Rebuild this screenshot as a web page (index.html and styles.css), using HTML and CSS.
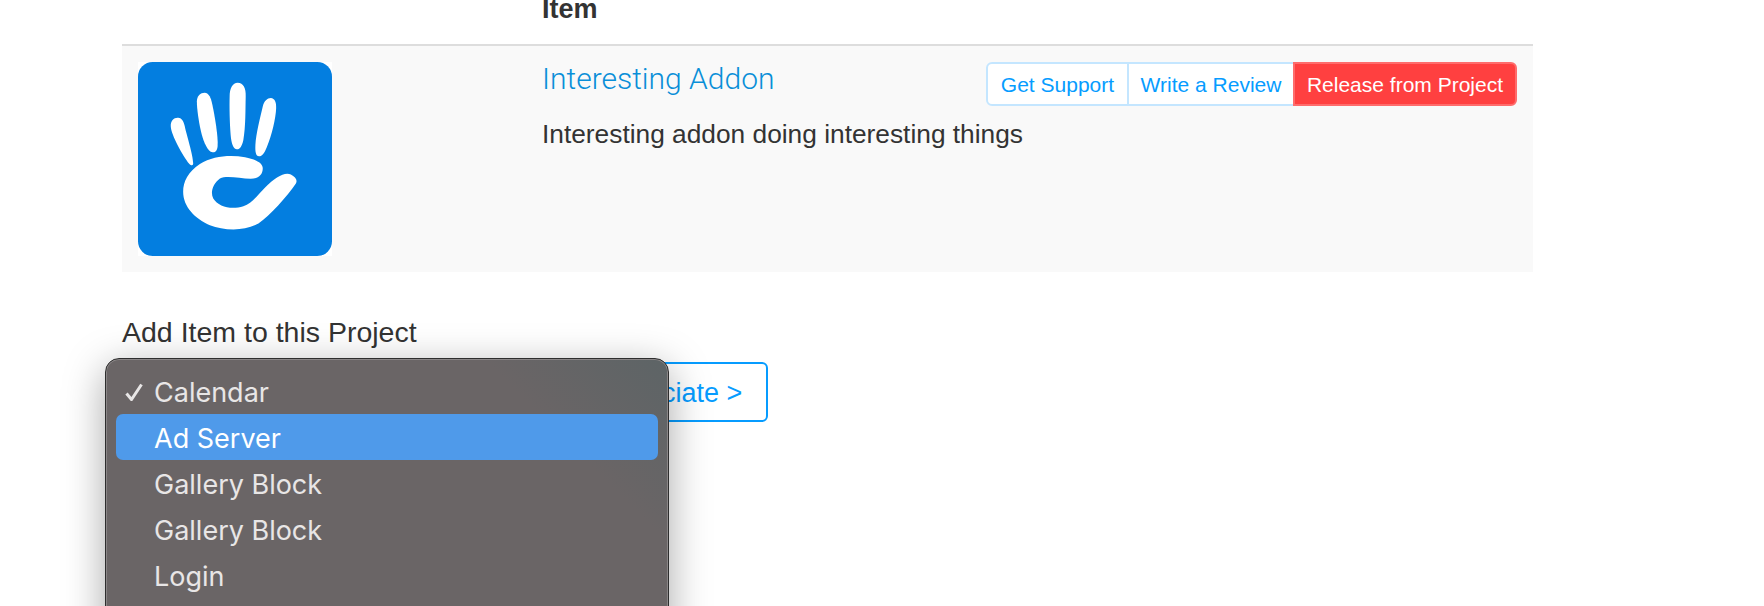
FILE: index.html
```html
<!DOCTYPE html>
<html lang="en">
<head>
    <meta charset="UTF-8">
    <title>Project Items</title>
    <link rel="stylesheet" href="styles.css">
</head>
<body>
    <div class="container">
        <table class="item-table">
            <thead>
                <tr>
                    <th class="col-logo"></th>
                    <th>Item</th>
                </tr>
            </thead>
            <tbody>
                <tr>
                    <td class="col-logo">
                        <svg class="logo" viewBox="25 7 580 580" aria-label="Concrete CMS">
                            <rect x="25" y="7" width="580" height="580" rx="44" fill="#037ee0"/>
                            <g fill="#fff">
                                <path d="M123 200C122 182 133 173 145 174C157 175 162 186 165 200C170 225 190 285 190 310C190 318 184 317 178 311C160 290 124 225 123 200Z"/>
                                <path d="M201 125C201 108 212 99 224 99C238 100 243 115 247 133C255 170 265 230 263 258C262 272 256 278 248 277C232 274 222 245 216 225C208 195 201 150 201 125Z"/>
                                <path d="M299 110C299 85 308 69 323 69C340 69 348 85 347 110C346 150 347 200 340 240C336 258 330 268 321 268C310 268 304 250 302 225C299 190 298 140 299 110Z"/>
                                <path d="M398 140C402 124 412 115 422 115C434 116 439 128 438 145C437 175 425 225 410 262C403 280 396 289 387 289C377 288 375 275 376 255C378 220 390 175 398 140Z"/>
                                <path d="M398 325C398 308 375 298 345 292C300 284 250 288 210 312C175 335 160 365 160 395C160 440 195 475 240 495C280 510 340 515 385 490C420 465 470 410 497 370C503 360 495 350 482 343C462 335 435 352 405 382C380 408 365 430 340 438C305 450 265 440 250 415C240 395 250 370 270 355C290 345 330 355 362 356C385 356 398 345 398 325Z"/>
                            </g>
                        </svg>
                    </td>
                    <td>
                        <div class="btn-group">
                            <a class="btn btn-support" href="#">Get Support</a>
                            <a class="btn" href="#">Write a Review</a>
                            <a class="btn btn-danger" href="#">Release from Project</a>
                        </div>
                        <h3 class="item-title">Interesting Addon</h3>
                        <p class="item-desc">Interesting addon doing interesting things</p>
                    </td>
                </tr>
            </tbody>
        </table>

        <form class="add-form">
            <label class="add-label">Add Item to this Project</label>
            <div class="add-row">
                <div class="select-slot">
                    <ul class="select-menu">
                        <li class="menu-item">
                            <svg class="check" viewBox="0 0 18 18"><path d="M1.5 10.5L6.5 16.5L16.5 1.5"/></svg>
                            Calendar
                        </li>
                        <li class="menu-item active">Ad Server</li>
                        <li class="menu-item">Gallery Block</li>
                        <li class="menu-item">Gallery Block</li>
                        <li class="menu-item">Login</li>
                    </ul>
                </div>
                <button class="btn-associate" type="button">Associate &gt;</button>
            </div>
        </form>
    </div>
</body>
</html>
```

FILE: styles.css
```css
* {
    box-sizing: border-box;
    margin: 0;
    padding: 0;
}

html, body {
    height: 606px;
    overflow: hidden;
}

body {
    font-family: "Liberation Sans", Arial, sans-serif;
    font-size: 26px;
    color: #333;
    background: #fff;
}

.container {
    width: 1411px;
    margin-left: 122px;
}

.item-table {
    width: 100%;
    border-collapse: collapse;
    table-layout: fixed;
}

.item-table th {
    height: 45px;
    padding: 0 16px 26px;
    font-size: 27px;
    line-height: 18px;
    text-align: left;
    vertical-align: top;
    border-bottom: 2px solid #ddd;
}

.item-table td {
    height: 226px;
    padding: 16px;
    vertical-align: top;
    background: #f9f9f9;
}

.col-logo {
    width: 404px;
}

.logo {
    display: block;
    width: 194px;
    height: 194px;
    background: #fff;
}

.item-title {
    margin-top: 1px;
    font-family: Roboto, "Liberation Sans", sans-serif;
    font-size: 30px;
    font-weight: 300;
    line-height: 32px;
    color: #0a8fd8;
}

.item-desc {
    margin-top: 22px;
    font-size: 26.3px;
    line-height: 34px;
}

.btn-group {
    display: flex;
    float: right;
    height: 44px;
}

.btn {
    display: block;
    padding: 0 11.5px;
    font-size: 21px;
    line-height: 41px;
    color: #069cff;
    text-decoration: none;
    background: #fff;
    border: 2px solid #c4e6ff;
    margin-left: -2px;
}

.btn-support {
    margin-left: 0;
    padding: 0 13px;
    border-radius: 6px 0 0 6px;
}

.btn-danger {
    padding: 0 12px;
    color: #fff;
    background: #ff4040;
    border-color: #ff6c6c;
    border-radius: 0 6px 6px 0;
}

.add-form {
    margin-top: 46px;
}

.add-label {
    display: block;
    font-size: 28.5px;
    line-height: 28px;
}

.add-row {
    display: flex;
    margin-top: 17px;
}

.select-slot {
    position: relative;
    width: 454px;
}

.select-menu {
    position: absolute;
    top: -5px;
    left: -17px;
    z-index: 2;
    width: 564px;
    height: 400px;
    padding: 9px 10px;
    list-style: none;
    font-family: Inter, "Liberation Sans", sans-serif;
    font-size: 27px;
    color: #e8e6e6;
    background: linear-gradient(225deg, #5d6466 0, #6a6566 130px);
    border: 1px solid #2e2e2e;
    border-radius: 14px;
    box-shadow: inset 0 0 0 1px #8a8687, 0 10px 40px rgba(0, 0, 0, 0.35);
}

.menu-item {
    position: relative;
    height: 46px;
    padding-left: 38px;
    line-height: 49px;
    border-radius: 7px;
}

.menu-item.active {
    color: #fff;
    background: #4f9aea;
}

.check {
    position: absolute;
    top: 15px;
    left: 9px;
    width: 18px;
    height: 18px;
    fill: none;
    stroke: #e8e6e6;
    stroke-width: 3;
}

.btn-associate {
    height: 60px;
    margin-top: -1px;
    padding: 2px 24px 0;
    font-family: inherit;
    font-size: 27px;
    color: #069cff;
    background: #fff;
    border: 2px solid #069cff;
    border-radius: 6px;
}
```
